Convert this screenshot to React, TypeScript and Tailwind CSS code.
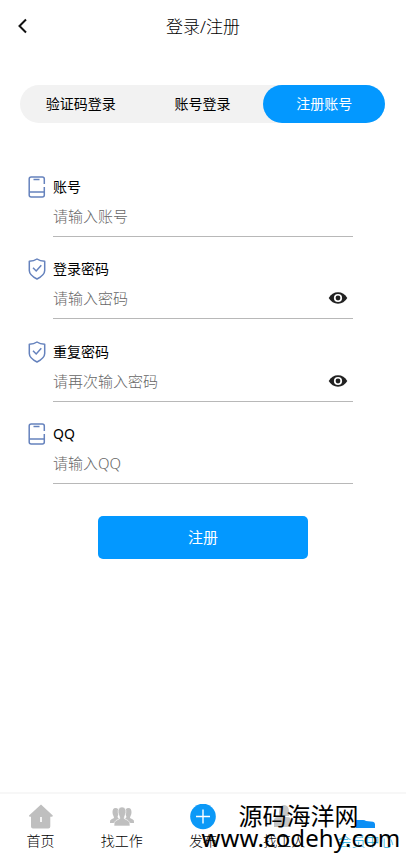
import type { ReactNode } from 'react';

import { useState } from 'react';
import clsx from 'clsx';

interface Field {
  label: string;
  placeholder: string;
  icon: 'phone' | 'shield';
  secret?: boolean;
}

const tabs = ['验证码登录', '账号登录', '注册账号'];

const fields: Field[] = [
  { label: '账号', placeholder: '请输入账号', icon: 'phone' },
  { label: '登录密码', placeholder: '请输入密码', icon: 'shield', secret: true },
  { label: '重复密码', placeholder: '请再次输入密码', icon: 'shield', secret: true },
  { label: 'QQ', placeholder: '请输入QQ', icon: 'phone' }
];

function PhoneIcon() {
  return (
    <svg width="18" height="22" viewBox="0 0 18 22" fill="none" stroke="#6582bd" strokeWidth="1.5">
      <path d="M16.3 8V3Q16.3 1 14.3 1H3.2Q1.2 1 1.2 3V19Q1.2 21 3.2 21H14.3Q16.3 21 16.3 19V11" />
      <path d="M1.2 16H16.3M5.5 3.5H11.5" />
    </svg>
  );
}

function ShieldIcon() {
  return (
    <svg width="18" height="22" viewBox="0 0 18 22" fill="none" stroke="#6582bd" strokeWidth="1.5">
      <path d="M9 1Q12 3.3 16.7 3.3V12.5Q16.7 17 9 21Q1.3 17 1.3 12.5V3.3Q6 3.3 9 1Z" strokeLinejoin="round" />
      <path d="M5 9.8L8.2 13L13.3 7.3" />
    </svg>
  );
}

function EyeIcon() {
  return (
    <svg width="20" height="14" viewBox="0 0 20 14">
      <path d="M.7 7Q4 1.3 10 1.3T19.3 7Q16 12.7 10 12.7T.7 7Z" fill="#222" />
      <circle cx="10" cy="7" r="4.1" fill="#fff" />
      <circle cx="10" cy="7" r="2.4" fill="#222" />
    </svg>
  );
}

function HomeIcon() {
  return (
    <svg width="26" height="26" viewBox="0 0 26 26">
      <path
        d="M13 .5L24.8 11.5Q25 12.8 23.5 12.8H22.3V22.5Q22.3 24.5 20.3 24.5H5Q3 24.5 3 22.5V12.8H2.2Q.8 12.8 1 11.5Z"
        fill="#bfbfbf"
      />
      <path d="M13 13V18" stroke="#f5f5f5" strokeWidth="2" />
    </svg>
  );
}

function PeopleIcon() {
  return (
    <svg width="26" height="26" viewBox="0 0 26 26" fill="#bfbfbf">
      <path d="M6.5 4C9 4 10 6 9.7 8.5C9.5 11 8.6 12 8.6 13.2L10 14.6L6 19H1Q.5 16 2.5 15.3L5 14C5 12 3.5 11 3.5 8.5C3.4 6 4.3 4 6.5 4Z" />
      <path d="M19.5 4C17 4 16 6 16.3 8.5C16.5 11 17.4 12 17.4 13.2L16 14.6L20 19H25Q25.5 16 23.5 15.3L21 14C21 12 22.5 11 22.5 8.5C22.6 6 21.7 4 19.5 4Z" />
      <path
        d="M13 3C16 3 17.2 5.4 16.8 8.4C16.5 11.3 15.2 12.3 15.2 14.5L19 16.5Q21.3 17.6 21 22H5Q4.7 17.6 7 16.5L10.8 14.5C10.8 12.3 9.5 11.3 9.2 8.4C8.8 5.4 10 3 13 3Z"
        stroke="#fff"
        strokeWidth=".6"
      />
    </svg>
  );
}

function PlusIcon() {
  return (
    <svg width="26" height="26" viewBox="0 0 26 26">
      <circle cx="13" cy="12.5" r="12.8" fill="#0c99f7" />
      <path d="M13 5.5V19.5M6 12.5H20" stroke="#fff" strokeWidth="1.4" />
    </svg>
  );
}

function WorkerIcon() {
  return (
    <svg width="26" height="26" viewBox="0 0 26 26" fill="#c6c6c6">
      <path d="M8 8Q8 1 13 1T18 8V12H8Z" />
      <path d="M3 23V16Q3 13 7 13H16Q20 13 20 16V23Z" />
    </svg>
  );
}

function MemberIcon() {
  return (
    <svg width="26" height="26" viewBox="0 0 26 26" fill="#0c8ff5">
      <path d="M4 16H11Q13 16 14 17L21 17.7Q22.7 18 23 20V24H4Z" />
    </svg>
  );
}

const navItems: { label: string; icon: ReactNode }[] = [
  { label: '首页', icon: <HomeIcon /> },
  { label: '找工作', icon: <PeopleIcon /> },
  { label: '发布', icon: <PlusIcon /> },
  { label: '找工人', icon: <WorkerIcon /> },
  { label: '会员中心', icon: <MemberIcon /> }
];

function FormField({ field }: { field: Field }) {
  const [visible, setVisible] = useState(false);

  return (
    <div className="flex h-[82.3px] flex-col">
      <label className="flex h-6 items-center gap-[7px] text-sm text-black">
        {field.icon === 'phone' ? <PhoneIcon /> : <ShieldIcon />}
        {field.label}
      </label>
      <div className="ml-[25px] flex h-[38px] w-[300px] items-center border-b border-[#b8b8b8] pr-[5px]">
        <input
          type={field.secret && !visible ? 'password' : 'text'}
          placeholder={field.placeholder}
          className="h-full min-w-0 flex-1 pb-[3px] text-[15px] font-light outline-none placeholder:text-[#666]"
        />
        {field.secret && (
          <button className="pb-[3px]" onClick={() => setVisible(!visible)}>
            <EyeIcon />
          </button>
        )}
      </div>
    </div>
  );
}

export default function App() {
  const [activeTab, setActiveTab] = useState('注册账号');

  return (
    <div className="relative flex h-[857px] w-[406px] flex-col overflow-hidden bg-white font-['Noto_Sans','Noto_Sans_CJK_SC',sans-serif] text-black">
      <header className="grid h-[54px] grid-cols-[46px_1fr_46px] items-center">
        <button className="pb-0.5 pl-[17px]">
          <svg width="11" height="16" viewBox="0 0 11 16" fill="none" stroke="#111" strokeWidth="2">
            <path d="M9 1.5L2.5 8L9 14.5" />
          </svg>
        </button>
        <h1 className="text-center text-[17px] font-light">登录/注册</h1>
      </header>

      <div className="mx-5 mt-[31px] flex h-[38px] w-[365px] rounded-full bg-[#f2f2f2]">
        {tabs.map((tab) => (
          <button
            key={tab}
            onClick={() => setActiveTab(tab)}
            className={clsx(
              'flex-1 rounded-full text-sm',
              activeTab === tab && 'bg-[#0398ff] text-white'
            )}
          >
            {tab}
          </button>
        ))}
      </div>

      <form className="mt-[52px] ml-7 flex flex-col" onSubmit={(e) => e.preventDefault()}>
        {fields.map((field) => (
          <FormField key={field.label} field={field} />
        ))}
      </form>

      <button className="mt-3 ml-[98px] h-[43px] w-[210px] shrink-0 rounded-[5px] bg-[#0398ff] text-[15px] text-white">
        注册
      </button>

      <nav className="mt-auto grid h-[65px] shrink-0 grid-cols-5 border-t-2 border-[#f7f7f7] pt-[10px]">
        {navItems.map((item) => (
          <button
            key={item.label}
            className={clsx(
              'flex flex-col items-center text-sm leading-[21px] font-light',
              item.label === '会员中心' && 'text-[#16aee0]'
            )}
          >
            {item.icon}
            {item.label}
          </button>
        ))}
      </nav>

      {/* Site mark over the tab bar */}
      <div className="pointer-events-none absolute right-1 bottom-[9px] flex w-[202px] flex-col items-center text-black">
        <span className="mr-[5px] text-2xl leading-6">源码海洋网</span>
        <span className="text-2xl leading-[20px] tracking-[0.1px] whitespace-nowrap">www.codehy.com</span>
      </div>
    </div>
  );
}
